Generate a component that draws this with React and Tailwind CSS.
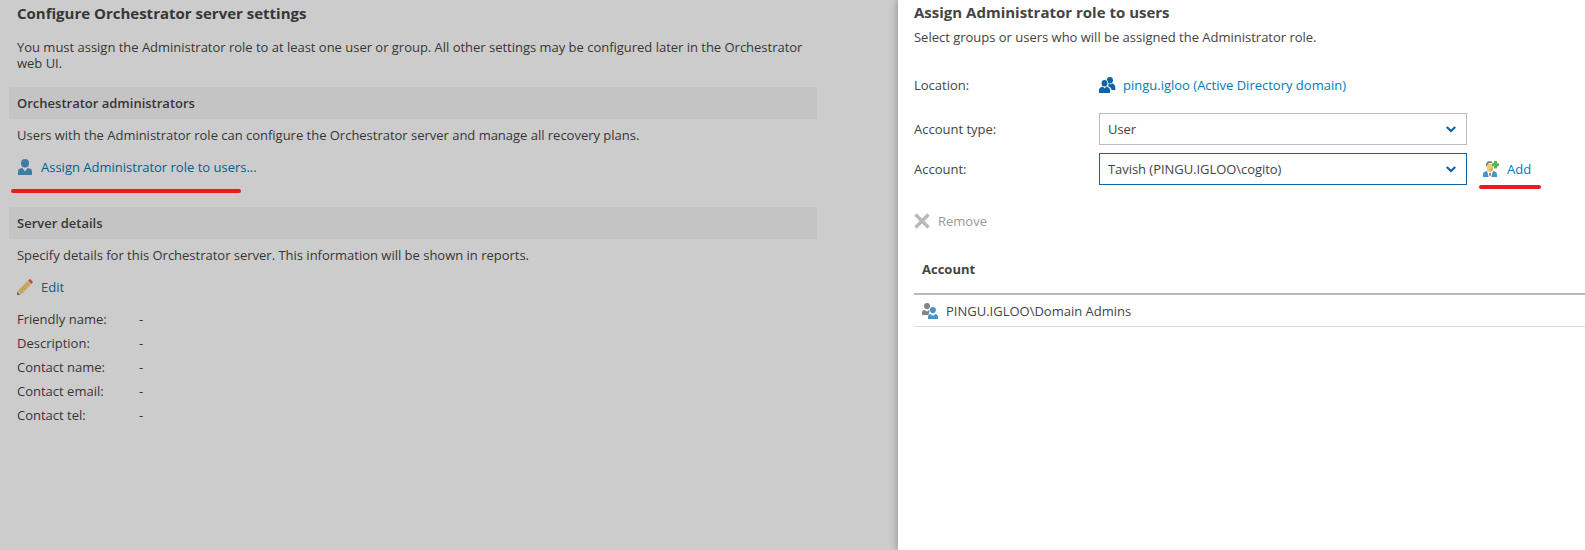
const details = ["Friendly name:", "Description:", "Contact name:", "Contact email:", "Contact tel:"];

function UserIcon() {
  return (
    <svg width="16" height="16" viewBox="0 0 16 16" fill="#3c7ca6">
      <ellipse cx="8" cy="4.200" rx="4" ry="4.200" />
      <path d="M1 16v-3c0-2 .7-3 2.300-3.400L5.300 9 8 12.500 10.700 9l2 .6C14.300 10 15 11 15 13v3z" />
    </svg>
  );
}

function PencilIcon() {
  return (
    <svg width="16" height="16" viewBox="0 0 16 16">
      <path d="m.8 11.700 9.500-9.500 3.500 3.500-9.500 9.500z" fill="#c9a45c" />
      <path d="m10.900 1.700 1.300-1.300c.4-.4.9-.4 1.300 0l2.100 2.100c.4.4.4.9 0 1.300L14.300 5.100z" fill="#b4553f" />
      <path d="m0 16 .2-3.600 3.400 3.400z" fill="#666" />
    </svg>
  );
}

function DomainIcon() {
  return (
    <svg width="17" height="16" viewBox="0 0 17 16" fill="#0f62a3">
      <ellipse cx="10.900" cy="3.200" rx="3" ry="3.200" />
      <path d="M9.300 7.500 10 6l1.500 1.500 1.600-1.200c2 .8 3 2 3.200 4v2.700h-3.700c-.4-2-1.300-3-3.300-3.500z" />
      <ellipse cx="5.500" cy="6.300" rx="3.700" ry="3.800" fill="#fff" />
      <ellipse cx="5.500" cy="6.300" rx="2.900" ry="3.300" />
      <path d="M0 16v-2.500c0-2 .9-2.900 2.500-3.400l1.300-.5L5.500 11.500l1.700-1.900 1.300.5c1.600.5 2.500 1.400 2.500 3.400V16z" />
    </svg>
  );
}

function GroupIcon() {
  return (
    <svg width="16" height="16" viewBox="0 0 16 16">
      <g fill="#858585">
        <ellipse cx="5" cy="3.100" rx="3" ry="3.100" />
        <path d="M0 12V9.500C0 8 .9 7.300 2.300 6.900L5 8.500l1.800-1.600 1 .4L6.500 12z" />
      </g>
      <ellipse cx="10.900" cy="7.100" rx="3.500" ry="3.500" fill="#fff" />
      <g fill="#4496c8">
        <ellipse cx="10.900" cy="7.100" rx="3" ry="3.100" />
        <path d="M6 16v-2.300c0-1.500.9-2.300 2.300-2.700L11 13 13.600 11c1.500.4 2.400 1.200 2.400 2.700V16z" />
      </g>
    </svg>
  );
}

function AddUserIcon() {
  return (
    <svg width="16" height="16" viewBox="0 0 16 16">
      <path d="M0 16v-2.500c0-1.700.8-2.600 2.400-3.100l2-.7h5.200l2 .7c1.600.5 2.400 1.400 2.400 3.100V16z" fill="#4496c8" />
      <path d="M4 9.800 5.700 16h2.600L10 9.800z" fill="#fff" />
      <path d="m7 11.500 1 1.200L7.500 15h-1L6 12.700z" fill="#777" />
      <path d="M3.800 3H10v3.600c0 2.600-1.300 4.400-3 4.400S3.800 9.200 3.800 6.600z" fill="#f3c777" />
      <path d="M3 6C2.600 2 4.200.3 7 .3c1.200 0 2 .2 2.600.6L8.500 2.100H6L4.300 3.700z" fill="#777" />
      <path d="M7 11c1.700-.2 3-2 3-4.400H9L7 8.800z" fill="#dba947" />
      <path d="M11 0h3v2.300h2v3h-2V7.500h-3V5.300H9v-3h2z" fill="#54b948" />
    </svg>
  );
}

function Select({ children, className }) {
  return (
    <div className={`flex h-8 w-[368px] items-center justify-between border pr-2.5 pl-2 ${className}`}>
      <span className="tracking-[-0.05px]">{children}</span>
      <svg width="10" height="7" viewBox="0 0 10 7" fill="none" stroke="#0f62a3" strokeWidth="2.200">
        <path d="M.7 1 5 5 9.300 1" />
      </svg>
    </div>
  );
}

function Section({ title, children }) {
  return (
    <section>
      <h2 className="flex h-8 items-center bg-[#c4c4c4] px-2 font-semibold">{title}</h2>
      <div className="px-2 pt-2">{children}</div>
    </section>
  );
}

export default function App() {
  return (
    <div className="flex h-[550px] w-[1585px] overflow-hidden bg-[#ccc] font-['Open_Sans',sans-serif] text-[13px] leading-4 text-[#363636]">
      <main className="w-[898px] shrink-0 pl-[9px]">
        <div className="w-[808px]">
          <h1 className="px-2 pt-[3px] text-[15px] leading-5 font-bold">Configure Orchestrator server settings</h1>
          <p className="mt-4 mb-4 px-2 tracking-[-0.016px]">
            You must assign the Administrator role to at least one user or group. All other settings may be configured later in the Orchestrator
            web UI.
          </p>
          <Section title="Orchestrator administrators">
            <p className="tracking-[-0.016px]">Users with the Administrator role can configure the Orchestrator server and manage all recovery plans.</p>
            <a className="mt-4 flex gap-2 text-[#00608f]"><UserIcon />Assign Administrator role to users...</a>
            <div className="mt-[13.500px] mb-[14.500px] -ml-1.5 h-1 w-[230px] rounded-full bg-[#e91b1e]" />
          </Section>
          <Section title="Server details">
            <p className="tracking-[-0.010px]">Specify details for this Orchestrator server. This information will be shown in reports.</p>
            <a className="mt-4 mb-4 flex gap-2 text-[#00608f]"><PencilIcon />Edit</a>
            <dl className="flex flex-col gap-2">
              {details.map((label) => (
                <div key={label} className="flex">
                  <dt className="w-[122px]">{label}</dt>
                  <dd>-</dd>
                </div>
              ))}
            </dl>
          </Section>
        </div>
      </main>
      <aside className="flex-1 bg-white pt-[2px] pl-4 text-[#444] shadow-[0_0_8px_rgba(0,0,0,0.35)]">
        <h1 className="text-[15px] leading-5 font-bold">Assign Administrator role to users</h1>
        <p className="mt-[7px] tracking-[-0.010px]">Select groups or users who will be assigned the Administrator role.</p>
        <div className="mt-8 flex">
          <span className="w-[185px]">Location:</span>
          <a className="flex gap-[7px] text-[#007cba]"><DomainIcon />pingu.igloo (Active Directory domain)</a>
        </div>
        <div className="mt-5 flex items-center">
          <span className="w-[185px]">Account type:</span>
          <Select className="border-[#bbb]">User</Select>
        </div>
        <div className="mt-2 flex items-center">
          <span className="w-[185px]">Account:</span>
          <Select className="border-[#0f62a3]">Tavish (PINGU.IGLOO\cogito)</Select>
          <a className="ml-4 flex gap-2 text-[#007cba]"><AddUserIcon />Add</a>
        </div>
        <div className="-mt-[0.500px] mb-[0.500px] ml-[565px] h-1 w-[62px] rounded-full bg-[#e91b1e]" />
        <button className="mt-6 flex gap-2 text-[#999]">
          <svg width="16" height="16" viewBox="0 0 16 16" stroke="#b9b9b9" strokeWidth="3.400"><path d="m1.500 1.500 13 13m0-13-13 13" /></svg>
          Remove
        </button>
        <div className="mt-6 flex h-[42px] items-start border-b-2 border-[#b9b9b9] pt-2 pl-2 font-bold">Account</div>
        <div className="flex h-8 items-start gap-2 border-b border-[#ddd] pt-2 pl-2"><GroupIcon />PINGU.IGLOO\Domain Admins</div>
      </aside>
    </div>
  );
}
